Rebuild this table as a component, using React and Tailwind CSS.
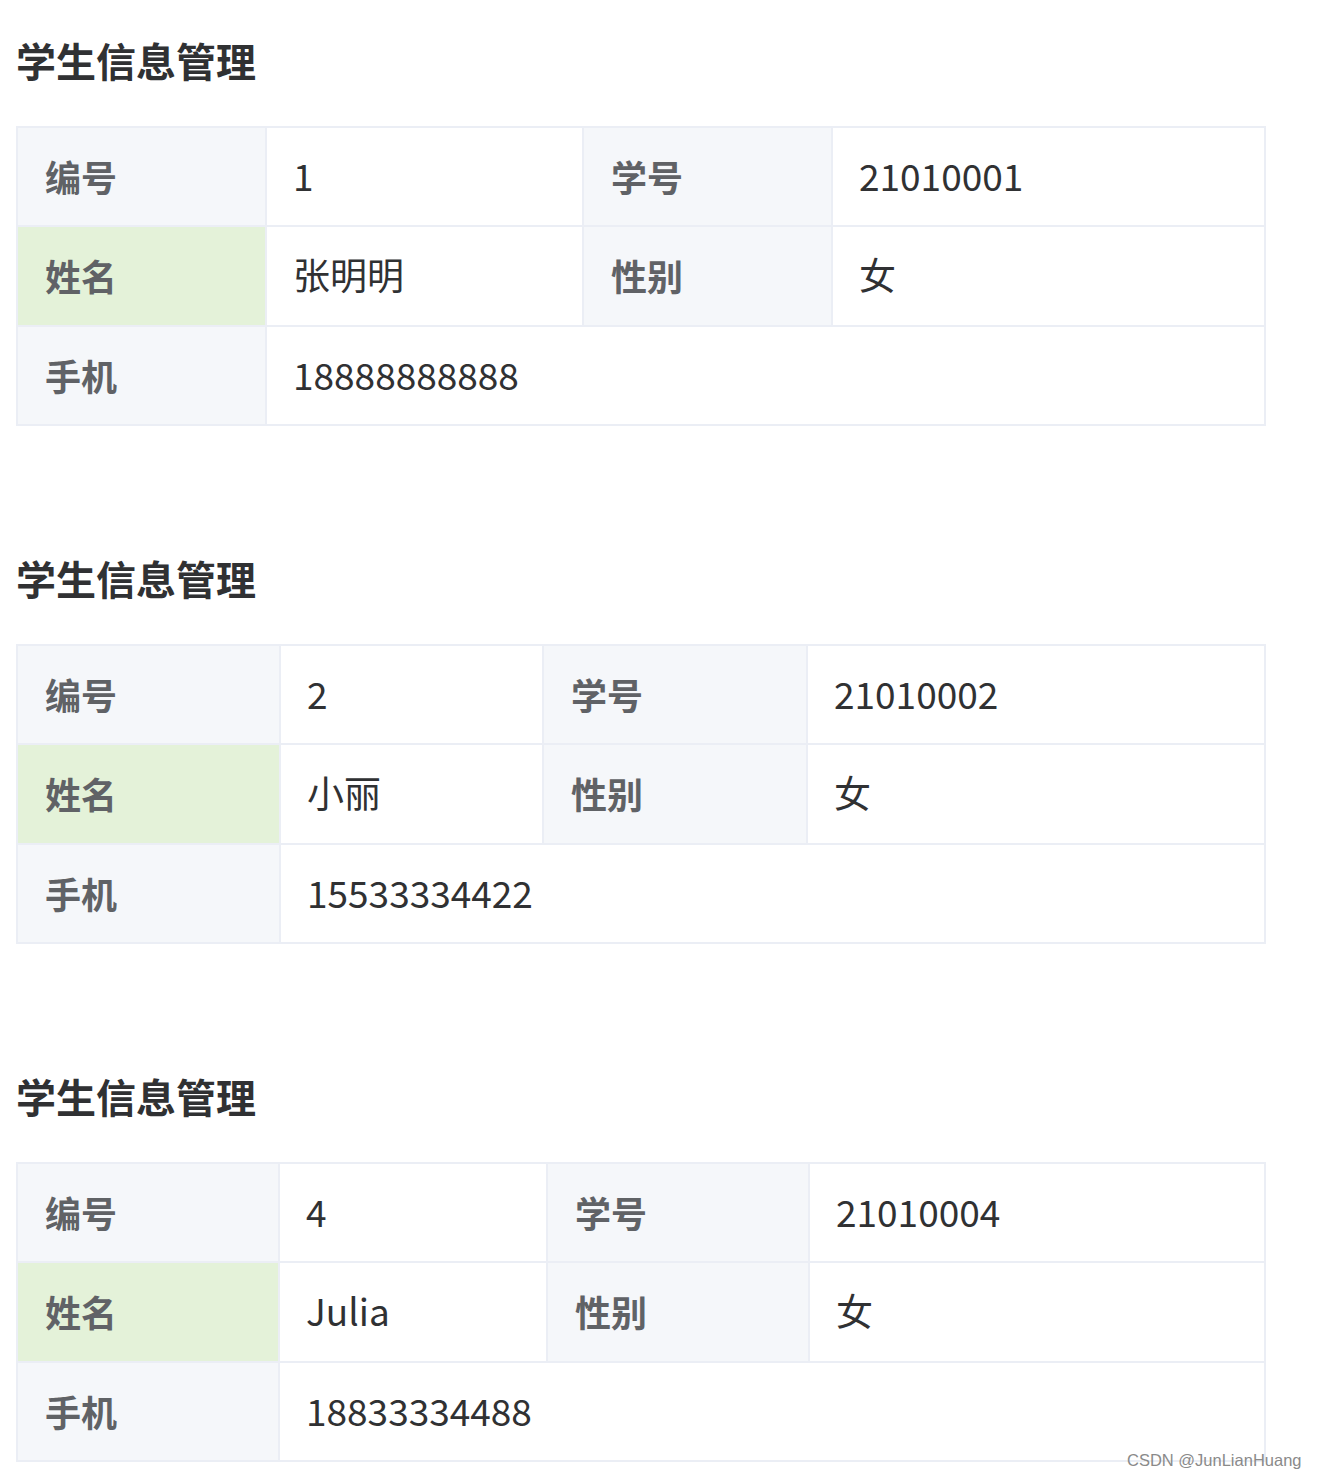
import React from "react";

const students = [
  { id: "1", no: "21010001", name: "张明明", sex: "女", phone: "18888888888", cols: "grid-cols-[247px_315px_247px_431px]" },
  { id: "2", no: "21010002", name: "小丽", sex: "女", phone: "15533334422", cols: "grid-cols-[261px_261px_262px_456px]" },
  { id: "4", no: "21010004", name: "Julia", sex: "女", phone: "18833334488", cols: "grid-cols-[260px_266px_260px_454px]" },
];

function Label({ children, green }) {
  return (
    <div
      className={`flex items-center px-[27px] pb-[2px] text-[36px] font-bold text-[#606266] ${
        green ? "bg-[#e4f2d9]" : "bg-[#f5f7fa]"
      }`}
    >
      {children}
    </div>
  );
}

function Value({ children, wide }) {
  return (
    <div
      className={`flex items-center px-[26px] pb-[2px] text-[37px] text-[#303133] bg-white ${
        wide ? "col-span-3" : ""
      }`}
    >
      {children}
    </div>
  );
}

function StudentCard({ s }) {
  return (
    <div>
      <h2 className="h-[60px] leading-[60px] text-[40px] font-bold text-[#303133] mb-[36px]">
        学生信息管理
      </h2>
      <div className={`grid ${s.cols} grid-rows-[97px_98px_97px] gap-[2px] p-[2px] bg-[#ebeef5] w-[1250px]`}>
        <Label>编号</Label>
        <Value>{s.id}</Value>
        <Label>学号</Label>
        <Value>{s.no}</Value>

        <Label green>姓名</Label>
        <Value>{s.name}</Value>
        <Label>性别</Label>
        <Value>{s.sex}</Value>

        <Label>手机</Label>
        <Value wide>{s.phone}</Value>
      </div>
    </div>
  );
}

export default function App() {
  return (
    <div
      className="relative min-h-[1478px] bg-white pt-[30px] pl-[16px] flex flex-col gap-[122px]"
      style={{ fontFamily: '"Noto Sans CJK SC", "Noto Sans", sans-serif' }}
    >
      {students.map((s) => (
        <StudentCard key={s.id} s={s} />
      ))}
      <span
        className="absolute left-[1127px] top-[1449px] text-[16.5px] text-[#8a8a8a] leading-[22px]"
        style={{ fontFamily: '"Liberation Sans", Arial, sans-serif' }}
      >
        CSDN @JunLianHuang
      </span>
    </div>
  );
}
